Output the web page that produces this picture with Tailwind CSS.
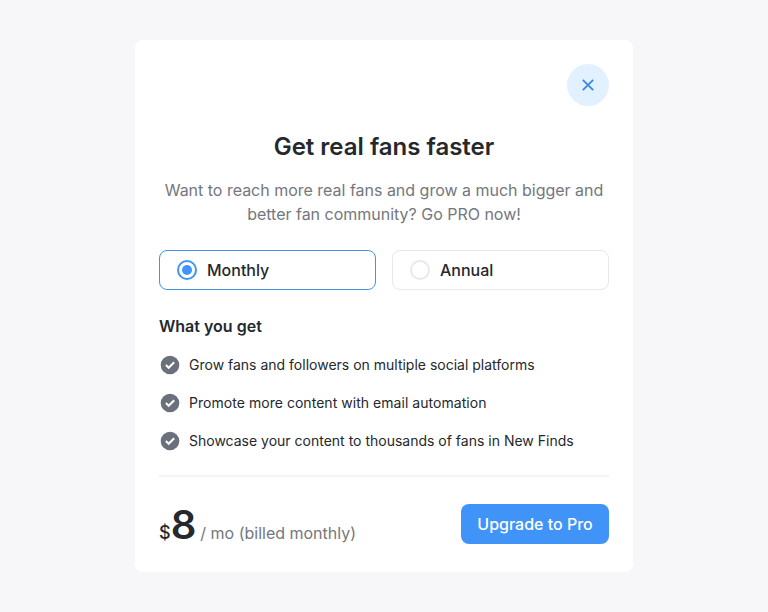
<!DOCTYPE html>
<html lang="en"><head><meta charset="utf-8"><title>Get real fans faster</title>
<script src="https://cdn.jsdelivr.net/npm/@tailwindcss/browser@4"></script></head>
<body class="h-[612px] overflow-hidden bg-[#f7f7f9] pt-10 font-['Inter',sans-serif] text-[#25282d]">
<main class="mx-auto flex h-[532px] w-[498px] flex-col rounded-lg bg-white px-6 pt-6">
<button aria-label="Close" class="flex size-[42px] shrink-0 items-center justify-center self-end rounded-full bg-[#e2f1ff]">
<svg class="size-3" viewBox="0 0 12 12" fill="none" stroke="#3f8ae0" stroke-width="1.9"><path d="M.8.8l10.4 10.4M11.2.8L.8 11.2"/></svg></button>
<h1 class="mt-[25px] text-center text-[24px] leading-8 font-semibold">Get real fans faster</h1>
<p class="mt-[15px] text-center text-[16px] leading-6 tracking-[-0.01px] text-[#74777d]">Want to reach more real fans and grow a much bigger and<br>better fan community? Go PRO now!</p>
<div class="mt-6 grid shrink-0 grid-cols-2 gap-4 text-[16px] font-medium">
<div class="flex h-10 items-center gap-[10px] rounded-lg border border-[#4094e8] pl-[17px]"><span class="flex size-5 items-center justify-center rounded-full border-2 border-[#4094f7]"><span class="size-[10px] rounded-full bg-[#4094f7]"></span></span>Monthly</div>
<div class="flex h-10 items-center gap-[10px] rounded-lg border border-[#e8e8ea] pl-[17px]"><span class="size-5 rounded-full border-2 border-[#e8e8ea]"></span>Annual</div>
</div>
<h2 class="mt-6 text-[16px] leading-6 font-semibold">What you get</h2>
<ul class="mt-[15px] flex flex-col gap-[14px] text-[14px] leading-6">
<li class="flex items-center gap-2"><svg class="size-[22px]" viewBox="0 0 22 22"><circle cx="11" cy="11" r="9.3" fill="#6b707d"/><path d="M6.9 11l2.8 2.8 5.5-5.6" fill="none" stroke="#fff" stroke-width="2"/></svg>Grow fans and followers on multiple social platforms</li>
<li class="flex items-center gap-2"><svg class="size-[22px]" viewBox="0 0 22 22"><circle cx="11" cy="11" r="9.3" fill="#6b707d"/><path d="M6.9 11l2.8 2.8 5.5-5.6" fill="none" stroke="#fff" stroke-width="2"/></svg><span class="tracking-[0.04px]">Promote more content with email automation</span></li>
<li class="flex items-center gap-2"><svg class="size-[22px]" viewBox="0 0 22 22"><circle cx="11" cy="11" r="9.3" fill="#6b707d"/><path d="M6.9 11l2.8 2.8 5.5-5.6" fill="none" stroke="#fff" stroke-width="2"/></svg>Showcase your content to thousands of fans in New Finds</li>
</ul>
<hr class="mt-[22px] border-t-2 border-[#f3f4f5]">
<div class="mt-[27px] flex h-10 items-center justify-between">
<div class="flex items-baseline pt-[2px]"><span class="text-[18px] font-medium">$</span><span class="text-[40px] leading-10 font-semibold">8</span><span class="ml-1 text-[16px] text-[#74777d]">/ mo (billed monthly)</span></div>
<button class="h-10 w-[148px] rounded-lg bg-[#4094f7] text-[16px] font-medium text-white">Upgrade to Pro</button>
</div>
</main></body></html>
